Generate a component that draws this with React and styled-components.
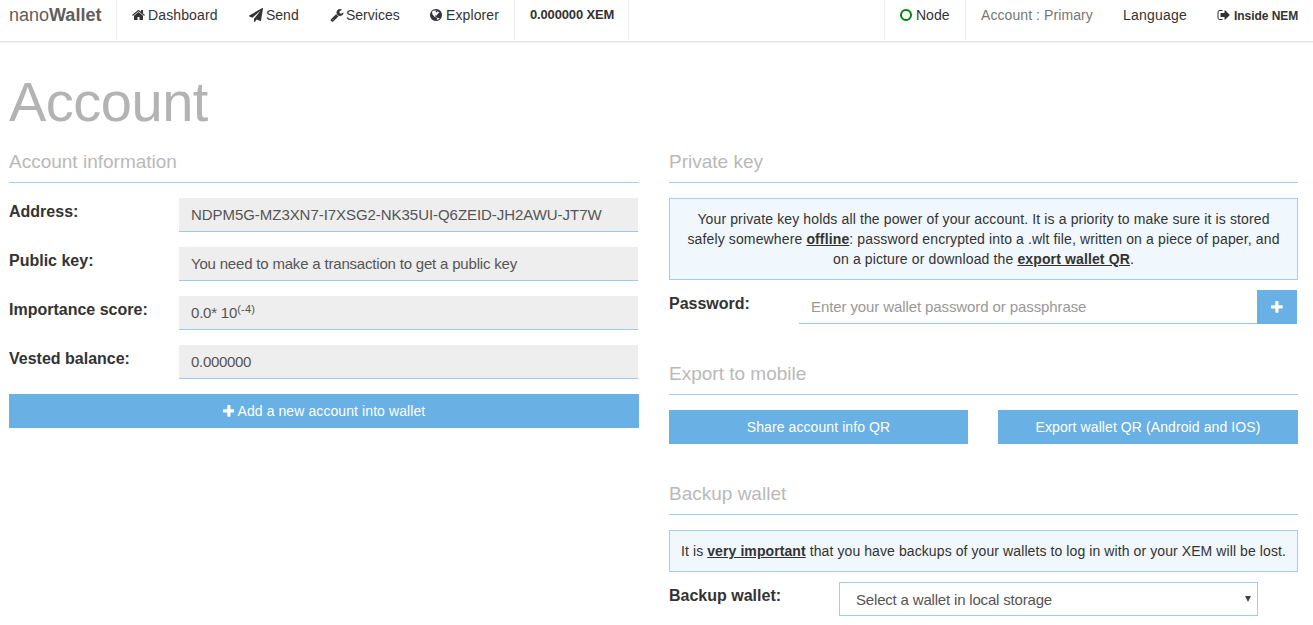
import React from "react";
import styled, { createGlobalStyle } from "styled-components";

const Global = createGlobalStyle`
  *, *::before, *::after { box-sizing: border-box; }
  body {
    margin: 0;
    background: #fff;
    color: #333;
    font: 14px/20px "Liberation Sans", Arial, sans-serif;
    overflow: hidden;
  }
`;

const Svg = styled.svg`
  display: inline-block;
  height: ${(p) => p.$size || 14}px;
  width: auto;
  fill: currentColor;
  flex: none;
`;

const icons = {
  home: [1664, "M1408 992v480q0 26-19 45t-45 19h-384v-384h-256v384h-384q-26 0-45-19t-19-45v-480q0-1 .5-3t.5-3l575-474 575 474q1 2 1 6zm223-69l-62 74q-8 9-21 11h-3q-13 0-21-7l-692-577-692 577q-12 8-24 7-13-2-21-11l-62-74q-8-10-7-23.5t11-21.5l719-599q32-26 76-26t76 26l244 204v-195q0-14 9-23t23-9h192q14 0 23 9t9 23v408l219 182q10 8 11 21.5t-7 23.5z"],
  send: [1792, "M1764 11q33 24 27 64l-256 1536q-5 29-32 45-14 8-31 8-11 0-24-5l-453-185-242 295q-18 23-49 23-13 0-22-4-19-7-30.500-23.500t-11.500-36.500v-349l864-1059-1069 925-395-162q-37-14-40-55-2-40 32-59l1664-960q15-9 32-9 20 0 36 11z"],
  wrench: [1728, "M448 1472q0-26-19-45t-45-19-45 19-19 45 19 45 45 19 45-19 19-45zm644-420l-682 682q-37 37-90 37-52 0-91-37l-106-108q-38-36-38-90 0-53 38-91l681-681q39 98 114.500 173.500t173.500 114.500zm634-435q0 39-23 106-47 134-164.500 217.500t-258.500 83.500q-185 0-316.500-131.500t-131.500-316.500 131.500-316.500 316.500-131.500q58 0 121.500 16.500t107.500 46.500q16 11 16 28t-16 28l-293 169v224l193 107q5-3 79-48.500t135.500-81 70.500-35.500q15 0 23.500 10t8.500 25z"],
  signOut: [1664, "M704 1440q0 4 1 20t.5 26.500-3 23.500-10 19.500-20.500 6.500h-320q-119 0-203.500-84.500t-84.500-203.500v-704q0-119 84.500-203.500t203.500-84.500h320q13 0 22.500 9.500t9.500 22.500q0 4 1 20t.5 26.500-3 23.500-10 19.500-20.500 6.500h-320q-66 0-113 47t-47 113v704q0 66 47 113t113 47h312l11.500 1 11.500 3 8 5.500 7 9 2 13.500zm928-544q0 26-19 45l-544 544q-19 19-45 19t-45-19-19-45v-288h-448q-26 0-45-19t-19-45v-384q0-26 19-45t45-19h448v-288q0-26 19-45t45-19 45 19l544 544q19 19 19 45z"],
  plus: [1408, "M1408 736v192q0 40-28 68t-68 28h-416v416q0 40-28 68t-68 28h-192q-40 0-68-28t-28-68v-416h-416q-40 0-68-28t-28-68v-192q0-40 28-68t68-28h416v-416q0-40 28-68t68-28h192q40 0 68 28t28 68v416h416q40 0 68 28t28 68z"],
  globe: [1536, "M768 128q209 0 385.5 103t279.5 279.5 103 385.5-103 385.5-279.5 279.5-385.5 103-385.500-103-279.5-279.5-103-385.5 103-385.500 279.500-279.500 385.500-103zm274 521q-2 1-9.500 9.500t-13.500 9.500q2 0 4.500-5t5-11 3.500-7q6-7 22-15 14-6 52-12 34-8 51 11-2-2 9.500-13t14.500-12q3-2 15-4.500t15-7.500l2-22q-12 1-17.500-7t-6.500-21q0 2-6 8 0-7-4.500-8t-11.500 1-9 1q-10-3-15-7.500t-8-16.500-4-15q-2-5-9.500-11t-9.500-10q-1-2-2.500-5.500t-3-6.500-4-5.500-5.500-2.500-7 5-7.500 10-4.500 5q-3-2-6-1.500t-4.500 1-4.500 3-5 3.500q-3 2-8.500 3t-8.500 2q15-5-1-11-10-4-16-3 9-4 7.500-12t-8.500-14h5q-1-4-8.500-8.500t-17.500-8.500-13-6q-8-5-34-9.500t-33-.5q-5 6-4.500 10.500t4 14 3.500 12.500q1 6-5.500 13t-6.500 12q0 7 14 15.500t10 21.500q-3 8-16 16t-16 12q-5 8-1.500 18.500t10.500 16.500q2 2 1.500 4t-3.500 4.500-5.500 4-6.500 3.500l-3 2q-11 5-20.500-6t-13.500-26q-7-25-16-30-23-8-29 1-5-13-41-26-25-9-58-4 6-1 0-15-7-15-19-12 3-6 4-17.500t1-13.500q3-13 12-23 1-1 7-8.500t9.500-13.500.5-6q35 4 50-11 5-5 11.500-17t10.500-17q9-6 14-5.500t14.500 5.500 14.500 5q14 1 15.500-11t-7.500-20q12 1 3-17-4-7-8-9-12-4-27 5-8 4 2 8-1-1-9.500 10.500t-16.500 17.500-16-5q-1-1-5.500-13.500t-9.500-13.500q-8 0-16 15 3-8-11-15t-24-8q19-12-8-27-7-4-20.500-5t-19.500 4q-5 7-5.500 11.500t5 8 10.500 5.500 11.500 4 8.500 3q14 10 8 14-2 1-8.500 3.500t-11.500 4.500-6 4q-3 4 0 14t-2 14q-5-5-9-17.500t-7-16.500q7 9-25 6l-10-1q-4 0-16 2t-20.500 1-13.500-8q-4-8 0-20 1-4 4-2-4-3-11-9.500t-10-8.500q-46 15-94 41 6 1 12-1 5-2 13-6.500t10-5.500q34-14 42-7l5-5q14 16 20 25-7-4-30-1-20 6-22 12 7 12 5 18-4-3-11.500-10t-14.500-11-15-5q-16 0-22 1-146 80-235 222 7 7 12 8 4 1 5 9t2.500 11 11.500-3q9 8 3 19 1-1 44 27 19 17 21 21 3 11-10 18-1-2-9-9t-9-4q-3 5 .5 18.500t10.500 12.500q-7 0-9.500 16t-2.500 35.500-1 23.500l2 1q-3 12 5.500 34.500t21.500 19.500q-13 3 20 43 6 8 8 9 3 2 12 7.500t15 10 10 10.500q4 5 10 22.500t14 23.500q-2 6 9.500 20t10.500 23q-1 0-2.500 1t-2.500 1q3 7 15.500 14t15.500 13q1 3 2 10t3 11 8 2q2-20-24-62-15-25-17-29-3-5-5.500-15.500t-4.500-14.500q2 0 6 1.500t8.500 3.500 7.500 4 2 3q-3 7 2 17.500t12 18.500 17 19 12 13q6 6 14 19.500t0 13.500q9 0 20 10.500t17 19.500q5 8 8 26t5 24q2 7 8.500 13.500t12.500 9.500l16 8 13 7q5 2 18.500 10.500t21.500 11.500q10 4 16 4t14.500-2.500 13.500-3.500q15-2 29 15t21 21q36 19 55 11-2 1 .5 7.500t8 15.500 9 14.500 5.500 8.500q5 6 18 15t18 15q6-4 7-9-3 8 7 20t18 10q14-3 14-32-31 15-49-18 0-1-2.500-5.500t-4-8.500-2.500-8.500 0-7.500 5-3q9 0 10-3.500t-2-12.500-4-13q-1-8-11-20t-12-15q-5 9-16 8t-16-9q0 1-1.500 5.500t-1.500 6.500q-13 0-15-1 1-3 2.500-17.500t3.500-22.500q1-4 5.500-12t7.500-14.500 4-12.500-4.500-9.500-17.500-2.500q-19 1-26 20-1 3-3 10.500t-5 11.500-9 7q-7 3-24 2t-24-5q-13-8-22.500-29t-9.500-37q0-10 2.500-26.500t3-25-5.500-24.500q3-2 9-9.500t10-10.500q2-1 4.500-1.500t4.500 0 4-1.500 3-6q-1-1-4-3-3-3-4-3 7 3 28.500-1.500t27.500 1.500q15 11 22-2 0-1-2.500-9.500t-.5-13.500q5 27 29 9 3 3 15.500 5t17.500 5q3 2 7 5.500t5.500 4.500 5-.5 8.500-6.500q10 14 12 24 11 40 19 44 7 3 11 2t4.500-9.500 0-14-1.500-12.500l-1-8v-18l-1-8q-15-3-18.500-12t1.500-18.500 15-18.500q1-1 8-3.500t15.500-6.500 12.500-8q21-19 15-35 7 0 11-9-1 0-5-3t-7.500-5-4.500-2q9-5 2-16 5-3 7.500-11t7.500-10q9 12 21 2 7-8 1-16 5-7 20.500-10.500t18.500-9.500q7 2 8-2t1-12 3-12q4-5 15-9t13-5l17-11q3-4 0-4 18 2 31-11 10-11-6-20 3-6-3-9.500t-15-5.500q3-1 11.500-.5t10.500-1.500q15-10-7-16-17-5-43 12zm-163 877q206-36 351-189-3-3-12.500-4.500t-12.500-3.500q-18-7-24-8 1-7-2.500-13t-8-9-12.500-8-11-7q-2-2-7-6t-7-5.500-7.500-4.500-8.500-2-10 1l-3 1q-3 1-5.500 2.500t-5.500 3-4 3 0 2.500q-21-17-36-22-5-1-11-5.500t-10.500-7-10-1.500-11.500 7q-5 5-6 15t-2 13q-7-5 0-17.500t2-18.500q-3-6-10.500-4.500t-12 4.500-11.500 8.500-9 6.500-8.500 5.500-8.500 7.500q-3 4-6 12t-5 11q-2-4-11.500-6.500t-9.500-5.500q2 10 4 35t5 38q7 31-12 48-27 25-29 40-4 22 12 26 0 7-8 20.500t-7 21.500q0 6 2 16z"],
};

const Icon = ({ name, size }) => (
  <Svg $size={size} viewBox={`0 0 ${icons[name][0]} 1792`} aria-hidden="true">
    <path d={icons[name][1]} />
  </Svg>
);

const Navbar = styled.nav`
  display: flex;
  justify-content: space-between;
  height: 43px;
  border-bottom: 1px solid #f3f3f3;
  box-shadow: inset 0 -1px #e5e5e5;
`;

const NavGroup = styled.div`
  display: flex;
  height: 40px;
`;

const Brand = styled.div`
  width: 117px;
  padding: 5px 0 0 9px;
  border-right: 1px solid #eee;
  color: #5e5e5e;
  font-size: 18px;
`;

const NavItem = styled.a`
  display: flex;
  align-items: center;
  gap: ${(p) => p.$gap ?? 4}px;
  height: 40px;
  width: ${(p) => p.$width}px;
  padding: 0 0 10px 15px;
  border-right: ${(p) => (p.$divided ? "1px solid #eee" : "0")};
  border-left: ${(p) => (p.$divided ? "1px solid #eee" : "0")};
  color: ${(p) => (p.$muted ? "#777" : "#333")};
  letter-spacing: ${(p) => p.$tracking || 0}px;
  white-space: nowrap;
`;

const NavStrong = styled.strong`
  padding-top: 2px;
  font-size: 12px;
  line-height: 20px;
  letter-spacing: -0.05px;
`;

const Balance = styled.strong`
  font-size: 13px;
  line-height: 20px;
  letter-spacing: -0.15px;
`;

const StatusRing = styled.span`
  width: 12px;
  height: 12px;
  border: 2px solid #008000;
  border-radius: 50%;
`;

const Main = styled.main`
  padding: 0 15px 0 9px;
`;

const PageTitle = styled.h1`
  margin: 28px 0 0;
  color: #b3b3b3;
  font-size: 56px;
  font-weight: 400;
  line-height: 62px;
  letter-spacing: -0.5px;
`;

const Columns = styled.div`
  display: grid;
  grid-template-columns: 630px 629px;
  column-gap: 30px;
`;

const Section = styled.section`
  padding-top: ${(p) => p.$top || 0}px;
`;

const SectionTitle = styled.h2`
  height: 50px;
  margin: 0 0 15px;
  padding-top: 18px;
  border-bottom: 1px solid #a0cfec;
  color: #b9b9b9;
  font-size: 19px;
  font-weight: 400;
  line-height: 21px;
`;

const Row = styled.div`
  display: flex;
  height: 34px;
  margin-bottom: 15px;
  padding-right: 1px;
`;

const Label = styled.label`
  flex: 0 0 ${(p) => p.$width || 170}px;
  padding-top: 3px;
  font-size: 16px;
  font-weight: 700;
  line-height: 22px;
`;

const Field = styled.div`
  flex: 1;
  padding: 6px 12px;
  border-bottom: 1px solid #9ccbea;
  background: ${(p) => (p.$empty ? "#fff" : "#eee")};
  color: ${(p) => (p.$empty ? "#999" : "#555")};
  font-size: 15px;
  line-height: 22px;
  letter-spacing: ${(p) => p.$tracking || 0}px;
`;

const Sup = styled.sup`
  position: relative;
  top: -5px;
  font-size: 11px;
  line-height: 0;
  letter-spacing: 0.2px;
  vertical-align: baseline;
`;

const Button = styled.button`
  display: flex;
  align-items: center;
  justify-content: center;
  gap: 3px;
  width: ${(p) => (p.$square ? "40px" : "100%")};
  height: 34px;
  padding: 0;
  border: 0;
  background: #69b0e5;
  color: #fff;
  font: 14px/20px "Liberation Sans", Arial, sans-serif;
  letter-spacing: 0.09px;
`;

const ButtonPair = styled.div`
  display: grid;
  grid-template-columns: 299px 300px;
  column-gap: 30px;
`;

const Notice = styled.p`
  margin: 0 0 10px;
  padding: 10px ${(p) => p.$inset ?? 10}px;
  border: 1px solid #a0cfec;
  background: #f0f7fd;
  letter-spacing: ${(p) => p.$tracking}px;
  text-align: center;
`;

const Emphasis = styled.b`
  text-decoration: underline;
`;

const Select = styled.div`
  display: flex;
  align-items: center;
  justify-content: space-between;
  width: 419px;
  height: 34px;
  padding: 1px 6px 0 16px;
  border: 1px solid #a0cfec;
  color: #555;
  font-size: 15px;
  letter-spacing: -0.18px;
`;

const Caret = styled.span`
  width: 0;
  margin-bottom: 2px;
  border: 3.5px solid transparent;
  border-top: 6px solid #444;
  border-bottom: 0;
`;

export default function App() {
  return (
    <>
      <Global />
      <Navbar>
        <NavGroup>
          <Brand>nano<b>Wallet</b></Brand>
          <NavItem $width={117} $gap={3} $tracking={0.13}><Icon name="home" /> Dashboard</NavItem>
          <NavItem $width={81} $gap={3}><Icon name="send" /> Send</NavItem>
          <NavItem $width={100} $gap={2.5}><Icon name="wrench" /> Services</NavItem>
          <NavItem $width={99} $tracking={0.1}><Icon name="globe" /> Explorer</NavItem>
          <NavItem $width={115} $divided><Balance>0.000000 XEM</Balance></NavItem>
        </NavGroup>
        <NavGroup>
          <NavItem $width={82} $divided><StatusRing /> Node</NavItem>
          <NavItem $width={142} $muted $tracking={0.08}>Account : Primary</NavItem>
          <NavItem $width={94} $tracking={0.2}>Language</NavItem>
          <NavItem $width={111}><Icon name="signOut" /> <NavStrong>Inside NEM</NavStrong></NavItem>
        </NavGroup>
      </Navbar>
      <Main>
        <PageTitle>Account</PageTitle>
        <Columns>
          <Section>
            <SectionTitle>Account information</SectionTitle>
            <Row><Label>Address:</Label><Field $tracking={-0.05}>NDPM5G-MZ3XN7-I7XSG2-NK35UI-Q6ZEID-JH2AWU-JT7W</Field></Row>
            <Row><Label>Public key:</Label><Field $tracking={-0.19}>You need to make a transaction to get a public key</Field></Row>
            <Row><Label>Importance score:</Label><Field $tracking={-0.2}>0.0* 10<Sup>(-4)</Sup></Field></Row>
            <Row><Label>Vested balance:</Label><Field $tracking={-0.3}>0.000000</Field></Row>
            <Button><Icon name="plus" size={15} /> Add a new account into wallet</Button>
          </Section>
          <div>
            <Section>
              <SectionTitle>Private key</SectionTitle>
              <Notice $tracking={0.13}>
                Your private key holds all the power of your account. It is a priority to make sure it is stored safely somewhere <Emphasis>offline</Emphasis>: password encrypted into a .wlt file, written on a piece of paper, and on a picture or download the <Emphasis>export wallet QR</Emphasis>.
              </Notice>
              <Row>
                <Label $width={130}>Password:</Label>
                <Field $empty $tracking={-0.1}>Enter your wallet password or passphrase</Field>
                <Button $square aria-label="Confirm"><Icon name="plus" size={15} /></Button>
              </Row>
            </Section>
            <Section $top={6}>
              <SectionTitle>Export to mobile</SectionTitle>
              <ButtonPair>
                <Button>Share account info QR</Button>
                <Button>Export wallet QR (Android and IOS)</Button>
              </ButtonPair>
            </Section>
            <Section $top={21}>
              <SectionTitle>Backup wallet</SectionTitle>
              <Notice $tracking={0.09} $inset={9}>
                It is <Emphasis>very important</Emphasis> that you have backups of your wallets to log in with or your XEM will be lost.
              </Notice>
              <Row>
                <Label $width={170}>Backup wallet:</Label>
                <Select>Select a wallet in local storage<Caret /></Select>
              </Row>
            </Section>
          </div>
        </Columns>
      </Main>
    </>
  );
}
